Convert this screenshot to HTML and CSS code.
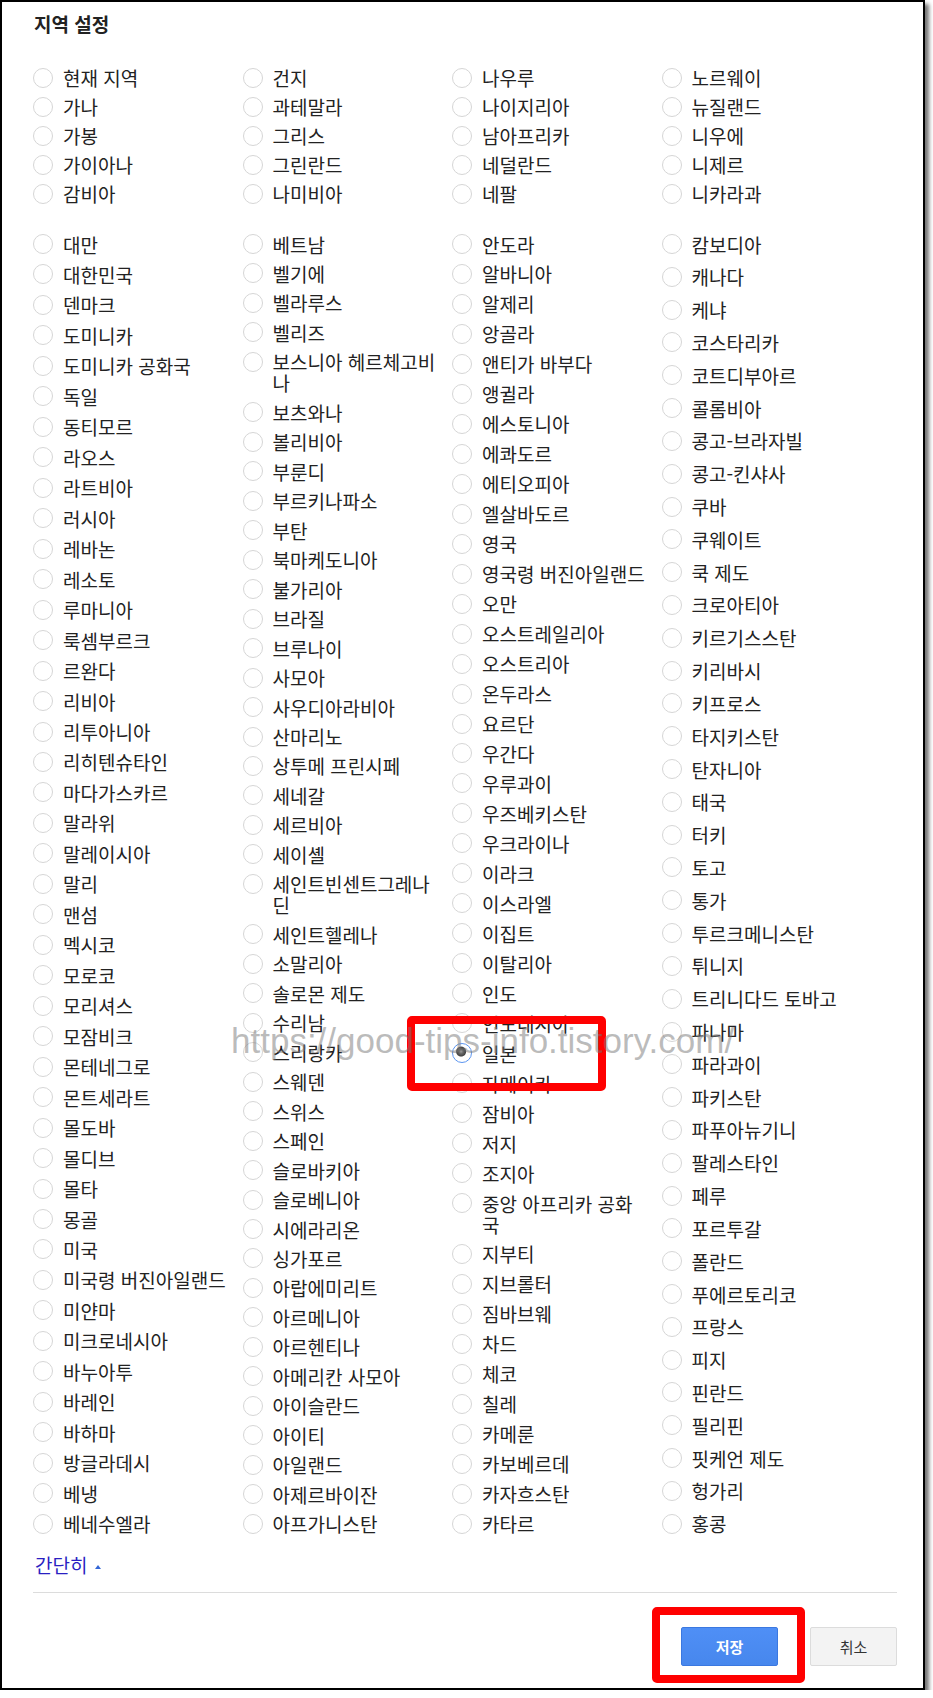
FILE: index.html
```html
<!DOCTYPE html>
<html lang="ko">
<head>
<meta charset="utf-8">
<title>지역 설정</title>
<link rel="stylesheet" href="styles.css">
</head>
<body>
<div class="frame">
  <h2 class="title">지역 설정</h2>

  <div class="group group-top">
    <div class="col">
      <label class="item"><input type="radio" name="r"><span class="txt">현재 지역</span></label>
      <label class="item"><input type="radio" name="r"><span class="txt">가나</span></label>
      <label class="item"><input type="radio" name="r"><span class="txt">가봉</span></label>
      <label class="item"><input type="radio" name="r"><span class="txt">가이아나</span></label>
      <label class="item"><input type="radio" name="r"><span class="txt">감비아</span></label>
    </div>
    <div class="col">
      <label class="item"><input type="radio" name="r"><span class="txt">건지</span></label>
      <label class="item"><input type="radio" name="r"><span class="txt">과테말라</span></label>
      <label class="item"><input type="radio" name="r"><span class="txt">그리스</span></label>
      <label class="item"><input type="radio" name="r"><span class="txt">그린란드</span></label>
      <label class="item"><input type="radio" name="r"><span class="txt">나미비아</span></label>
    </div>
    <div class="col">
      <label class="item"><input type="radio" name="r"><span class="txt">나우루</span></label>
      <label class="item"><input type="radio" name="r"><span class="txt">나이지리아</span></label>
      <label class="item"><input type="radio" name="r"><span class="txt">남아프리카</span></label>
      <label class="item"><input type="radio" name="r"><span class="txt">네덜란드</span></label>
      <label class="item"><input type="radio" name="r"><span class="txt">네팔</span></label>
    </div>
    <div class="col">
      <label class="item"><input type="radio" name="r"><span class="txt">노르웨이</span></label>
      <label class="item"><input type="radio" name="r"><span class="txt">뉴질랜드</span></label>
      <label class="item"><input type="radio" name="r"><span class="txt">니우에</span></label>
      <label class="item"><input type="radio" name="r"><span class="txt">니제르</span></label>
      <label class="item"><input type="radio" name="r"><span class="txt">니카라과</span></label>
    </div>
  </div>

  <div class="group group-all">
    <div class="col spread">
      <label class="item"><input type="radio" name="r"><span class="txt">대만</span></label>
      <label class="item"><input type="radio" name="r"><span class="txt">대한민국</span></label>
      <label class="item"><input type="radio" name="r"><span class="txt">덴마크</span></label>
      <label class="item"><input type="radio" name="r"><span class="txt">도미니카</span></label>
      <label class="item"><input type="radio" name="r"><span class="txt">도미니카 공화국</span></label>
      <label class="item"><input type="radio" name="r"><span class="txt">독일</span></label>
      <label class="item"><input type="radio" name="r"><span class="txt">동티모르</span></label>
      <label class="item"><input type="radio" name="r"><span class="txt">라오스</span></label>
      <label class="item"><input type="radio" name="r"><span class="txt">라트비아</span></label>
      <label class="item"><input type="radio" name="r"><span class="txt">러시아</span></label>
      <label class="item"><input type="radio" name="r"><span class="txt">레바논</span></label>
      <label class="item"><input type="radio" name="r"><span class="txt">레소토</span></label>
      <label class="item"><input type="radio" name="r"><span class="txt">루마니아</span></label>
      <label class="item"><input type="radio" name="r"><span class="txt">룩셈부르크</span></label>
      <label class="item"><input type="radio" name="r"><span class="txt">르완다</span></label>
      <label class="item"><input type="radio" name="r"><span class="txt">리비아</span></label>
      <label class="item"><input type="radio" name="r"><span class="txt">리투아니아</span></label>
      <label class="item"><input type="radio" name="r"><span class="txt">리히텐슈타인</span></label>
      <label class="item"><input type="radio" name="r"><span class="txt">마다가스카르</span></label>
      <label class="item"><input type="radio" name="r"><span class="txt">말라위</span></label>
      <label class="item"><input type="radio" name="r"><span class="txt">말레이시아</span></label>
      <label class="item"><input type="radio" name="r"><span class="txt">말리</span></label>
      <label class="item"><input type="radio" name="r"><span class="txt">맨섬</span></label>
      <label class="item"><input type="radio" name="r"><span class="txt">멕시코</span></label>
      <label class="item"><input type="radio" name="r"><span class="txt">모로코</span></label>
      <label class="item"><input type="radio" name="r"><span class="txt">모리셔스</span></label>
      <label class="item"><input type="radio" name="r"><span class="txt">모잠비크</span></label>
      <label class="item"><input type="radio" name="r"><span class="txt">몬테네그로</span></label>
      <label class="item"><input type="radio" name="r"><span class="txt">몬트세라트</span></label>
      <label class="item"><input type="radio" name="r"><span class="txt">몰도바</span></label>
      <label class="item"><input type="radio" name="r"><span class="txt">몰디브</span></label>
      <label class="item"><input type="radio" name="r"><span class="txt">몰타</span></label>
      <label class="item"><input type="radio" name="r"><span class="txt">몽골</span></label>
      <label class="item"><input type="radio" name="r"><span class="txt">미국</span></label>
      <label class="item"><input type="radio" name="r"><span class="txt">미국령 버진아일랜드</span></label>
      <label class="item"><input type="radio" name="r"><span class="txt">미얀마</span></label>
      <label class="item"><input type="radio" name="r"><span class="txt">미크로네시아</span></label>
      <label class="item"><input type="radio" name="r"><span class="txt">바누아투</span></label>
      <label class="item"><input type="radio" name="r"><span class="txt">바레인</span></label>
      <label class="item"><input type="radio" name="r"><span class="txt">바하마</span></label>
      <label class="item"><input type="radio" name="r"><span class="txt">방글라데시</span></label>
      <label class="item"><input type="radio" name="r"><span class="txt">베냉</span></label>
      <label class="item"><input type="radio" name="r"><span class="txt">베네수엘라</span></label>
    </div>
    <div class="col spread">
      <label class="item"><input type="radio" name="r"><span class="txt">베트남</span></label>
      <label class="item"><input type="radio" name="r"><span class="txt">벨기에</span></label>
      <label class="item"><input type="radio" name="r"><span class="txt">벨라루스</span></label>
      <label class="item"><input type="radio" name="r"><span class="txt">벨리즈</span></label>
      <label class="item"><input type="radio" name="r"><span class="txt">보스니아 헤르체고비나</span></label>
      <label class="item"><input type="radio" name="r"><span class="txt">보츠와나</span></label>
      <label class="item"><input type="radio" name="r"><span class="txt">볼리비아</span></label>
      <label class="item"><input type="radio" name="r"><span class="txt">부룬디</span></label>
      <label class="item"><input type="radio" name="r"><span class="txt">부르키나파소</span></label>
      <label class="item"><input type="radio" name="r"><span class="txt">부탄</span></label>
      <label class="item"><input type="radio" name="r"><span class="txt">북마케도니아</span></label>
      <label class="item"><input type="radio" name="r"><span class="txt">불가리아</span></label>
      <label class="item"><input type="radio" name="r"><span class="txt">브라질</span></label>
      <label class="item"><input type="radio" name="r"><span class="txt">브루나이</span></label>
      <label class="item"><input type="radio" name="r"><span class="txt">사모아</span></label>
      <label class="item"><input type="radio" name="r"><span class="txt">사우디아라비아</span></label>
      <label class="item"><input type="radio" name="r"><span class="txt">산마리노</span></label>
      <label class="item"><input type="radio" name="r"><span class="txt">상투메 프린시페</span></label>
      <label class="item"><input type="radio" name="r"><span class="txt">세네갈</span></label>
      <label class="item"><input type="radio" name="r"><span class="txt">세르비아</span></label>
      <label class="item"><input type="radio" name="r"><span class="txt">세이셸</span></label>
      <label class="item"><input type="radio" name="r"><span class="txt">세인트빈센트그레나딘</span></label>
      <label class="item"><input type="radio" name="r"><span class="txt">세인트헬레나</span></label>
      <label class="item"><input type="radio" name="r"><span class="txt">소말리아</span></label>
      <label class="item"><input type="radio" name="r"><span class="txt">솔로몬 제도</span></label>
      <label class="item"><input type="radio" name="r"><span class="txt">수리남</span></label>
      <label class="item"><input type="radio" name="r"><span class="txt">스리랑카</span></label>
      <label class="item"><input type="radio" name="r"><span class="txt">스웨덴</span></label>
      <label class="item"><input type="radio" name="r"><span class="txt">스위스</span></label>
      <label class="item"><input type="radio" name="r"><span class="txt">스페인</span></label>
      <label class="item"><input type="radio" name="r"><span class="txt">슬로바키아</span></label>
      <label class="item"><input type="radio" name="r"><span class="txt">슬로베니아</span></label>
      <label class="item"><input type="radio" name="r"><span class="txt">시에라리온</span></label>
      <label class="item"><input type="radio" name="r"><span class="txt">싱가포르</span></label>
      <label class="item"><input type="radio" name="r"><span class="txt">아랍에미리트</span></label>
      <label class="item"><input type="radio" name="r"><span class="txt">아르메니아</span></label>
      <label class="item"><input type="radio" name="r"><span class="txt">아르헨티나</span></label>
      <label class="item"><input type="radio" name="r"><span class="txt">아메리칸 사모아</span></label>
      <label class="item"><input type="radio" name="r"><span class="txt">아이슬란드</span></label>
      <label class="item"><input type="radio" name="r"><span class="txt">아이티</span></label>
      <label class="item"><input type="radio" name="r"><span class="txt">아일랜드</span></label>
      <label class="item"><input type="radio" name="r"><span class="txt">아제르바이잔</span></label>
      <label class="item"><input type="radio" name="r"><span class="txt">아프가니스탄</span></label>
    </div>
    <div class="col spread">
      <label class="item"><input type="radio" name="r"><span class="txt">안도라</span></label>
      <label class="item"><input type="radio" name="r"><span class="txt">알바니아</span></label>
      <label class="item"><input type="radio" name="r"><span class="txt">알제리</span></label>
      <label class="item"><input type="radio" name="r"><span class="txt">앙골라</span></label>
      <label class="item"><input type="radio" name="r"><span class="txt">앤티가 바부다</span></label>
      <label class="item"><input type="radio" name="r"><span class="txt">앵귈라</span></label>
      <label class="item"><input type="radio" name="r"><span class="txt">에스토니아</span></label>
      <label class="item"><input type="radio" name="r"><span class="txt">에콰도르</span></label>
      <label class="item"><input type="radio" name="r"><span class="txt">에티오피아</span></label>
      <label class="item"><input type="radio" name="r"><span class="txt">엘살바도르</span></label>
      <label class="item"><input type="radio" name="r"><span class="txt">영국</span></label>
      <label class="item"><input type="radio" name="r"><span class="txt">영국령 버진아일랜드</span></label>
      <label class="item"><input type="radio" name="r"><span class="txt">오만</span></label>
      <label class="item"><input type="radio" name="r"><span class="txt">오스트레일리아</span></label>
      <label class="item"><input type="radio" name="r"><span class="txt">오스트리아</span></label>
      <label class="item"><input type="radio" name="r"><span class="txt">온두라스</span></label>
      <label class="item"><input type="radio" name="r"><span class="txt">요르단</span></label>
      <label class="item"><input type="radio" name="r"><span class="txt">우간다</span></label>
      <label class="item"><input type="radio" name="r"><span class="txt">우루과이</span></label>
      <label class="item"><input type="radio" name="r"><span class="txt">우즈베키스탄</span></label>
      <label class="item"><input type="radio" name="r"><span class="txt">우크라이나</span></label>
      <label class="item"><input type="radio" name="r"><span class="txt">이라크</span></label>
      <label class="item"><input type="radio" name="r"><span class="txt">이스라엘</span></label>
      <label class="item"><input type="radio" name="r"><span class="txt">이집트</span></label>
      <label class="item"><input type="radio" name="r"><span class="txt">이탈리아</span></label>
      <label class="item"><input type="radio" name="r"><span class="txt">인도</span></label>
      <label class="item"><input type="radio" name="r"><span class="txt">인도네시아</span></label>
      <label class="item"><input type="radio" name="r" checked><span class="txt">일본</span></label>
      <label class="item"><input type="radio" name="r"><span class="txt">자메이카</span></label>
      <label class="item"><input type="radio" name="r"><span class="txt">잠비아</span></label>
      <label class="item"><input type="radio" name="r"><span class="txt">저지</span></label>
      <label class="item"><input type="radio" name="r"><span class="txt">조지아</span></label>
      <label class="item"><input type="radio" name="r"><span class="txt">중앙 아프리카 공화국</span></label>
      <label class="item"><input type="radio" name="r"><span class="txt">지부티</span></label>
      <label class="item"><input type="radio" name="r"><span class="txt">지브롤터</span></label>
      <label class="item"><input type="radio" name="r"><span class="txt">짐바브웨</span></label>
      <label class="item"><input type="radio" name="r"><span class="txt">차드</span></label>
      <label class="item"><input type="radio" name="r"><span class="txt">체코</span></label>
      <label class="item"><input type="radio" name="r"><span class="txt">칠레</span></label>
      <label class="item"><input type="radio" name="r"><span class="txt">카메룬</span></label>
      <label class="item"><input type="radio" name="r"><span class="txt">카보베르데</span></label>
      <label class="item"><input type="radio" name="r"><span class="txt">카자흐스탄</span></label>
      <label class="item"><input type="radio" name="r"><span class="txt">카타르</span></label>
    </div>
    <div class="col spread">
      <label class="item"><input type="radio" name="r"><span class="txt">캄보디아</span></label>
      <label class="item"><input type="radio" name="r"><span class="txt">캐나다</span></label>
      <label class="item"><input type="radio" name="r"><span class="txt">케냐</span></label>
      <label class="item"><input type="radio" name="r"><span class="txt">코스타리카</span></label>
      <label class="item"><input type="radio" name="r"><span class="txt">코트디부아르</span></label>
      <label class="item"><input type="radio" name="r"><span class="txt">콜롬비아</span></label>
      <label class="item"><input type="radio" name="r"><span class="txt">콩고-브라자빌</span></label>
      <label class="item"><input type="radio" name="r"><span class="txt">콩고-킨샤사</span></label>
      <label class="item"><input type="radio" name="r"><span class="txt">쿠바</span></label>
      <label class="item"><input type="radio" name="r"><span class="txt">쿠웨이트</span></label>
      <label class="item"><input type="radio" name="r"><span class="txt">쿡 제도</span></label>
      <label class="item"><input type="radio" name="r"><span class="txt">크로아티아</span></label>
      <label class="item"><input type="radio" name="r"><span class="txt">키르기스스탄</span></label>
      <label class="item"><input type="radio" name="r"><span class="txt">키리바시</span></label>
      <label class="item"><input type="radio" name="r"><span class="txt">키프로스</span></label>
      <label class="item"><input type="radio" name="r"><span class="txt">타지키스탄</span></label>
      <label class="item"><input type="radio" name="r"><span class="txt">탄자니아</span></label>
      <label class="item"><input type="radio" name="r"><span class="txt">태국</span></label>
      <label class="item"><input type="radio" name="r"><span class="txt">터키</span></label>
      <label class="item"><input type="radio" name="r"><span class="txt">토고</span></label>
      <label class="item"><input type="radio" name="r"><span class="txt">통가</span></label>
      <label class="item"><input type="radio" name="r"><span class="txt">투르크메니스탄</span></label>
      <label class="item"><input type="radio" name="r"><span class="txt">튀니지</span></label>
      <label class="item"><input type="radio" name="r"><span class="txt">트리니다드 토바고</span></label>
      <label class="item"><input type="radio" name="r"><span class="txt">파나마</span></label>
      <label class="item"><input type="radio" name="r"><span class="txt">파라과이</span></label>
      <label class="item"><input type="radio" name="r"><span class="txt">파키스탄</span></label>
      <label class="item"><input type="radio" name="r"><span class="txt">파푸아뉴기니</span></label>
      <label class="item"><input type="radio" name="r"><span class="txt">팔레스타인</span></label>
      <label class="item"><input type="radio" name="r"><span class="txt">페루</span></label>
      <label class="item"><input type="radio" name="r"><span class="txt">포르투갈</span></label>
      <label class="item"><input type="radio" name="r"><span class="txt">폴란드</span></label>
      <label class="item"><input type="radio" name="r"><span class="txt">푸에르토리코</span></label>
      <label class="item"><input type="radio" name="r"><span class="txt">프랑스</span></label>
      <label class="item"><input type="radio" name="r"><span class="txt">피지</span></label>
      <label class="item"><input type="radio" name="r"><span class="txt">핀란드</span></label>
      <label class="item"><input type="radio" name="r"><span class="txt">필리핀</span></label>
      <label class="item"><input type="radio" name="r"><span class="txt">핏케언 제도</span></label>
      <label class="item"><input type="radio" name="r"><span class="txt">헝가리</span></label>
      <label class="item"><input type="radio" name="r"><span class="txt">홍콩</span></label>
    </div>
  </div>

  <a class="less" href="#">간단히<span class="caret"></span></a>

  <div class="divider"></div>

  <div class="actions">
    <button class="btn btn-primary" type="button">저장</button>
    <button class="btn btn-default" type="button">취소</button>
  </div>

  <div class="mark mark-japan"></div>
  <div class="mark mark-save"></div>
  <div class="watermark">https://good-tips-info.tistory.com/</div>
</div>
</body>
</html>
```

FILE: styles.css
```css
html, body {
  margin: 0;
  padding: 0;
  background: #ffffff;
}

body {
  font-family: "Noto Sans CJK KR", "Noto Sans", sans-serif;
  color: #222222;
}

.frame {
  position: relative;
  box-sizing: border-box;
  width: 925px;
  height: 1690px;
  border: 2px solid #000000;
  box-shadow: 4px 4px 4px rgba(0, 0, 0, 0.55);
  padding: 10px 26px 0 31px;
  background: #ffffff;
}

.title {
  margin: 0;
  font-size: 19px;
  line-height: 24px;
  font-weight: 700;
  color: #222222;
  padding-left: 1px;
}

.group {
  display: grid;
  grid-template-columns: repeat(4, 209.5px);
}

.group-top {
  margin-top: 31px;
}

.group-top .col {
  display: flex;
  flex-direction: column;
  gap: 8px;
}

.group-top .item {
  height: 21px;
}

.group-all {
  margin-top: 29.5px;
  height: 1301px;
}

.col.spread {
  display: flex;
  flex-direction: column;
  justify-content: space-between;
}

.item {
  display: flex;
  align-items: flex-start;
  gap: 10px;
  font-size: 19px;
  line-height: 21px;
  color: #222222;
  cursor: pointer;
}

.txt {
  display: block;
  width: 165px;
}

.item input {
  -webkit-appearance: none;
  appearance: none;
  box-sizing: border-box;
  flex: none;
  width: 20px;
  height: 20px;
  margin: 0.5px 0 0 0;
  border: 1px solid #d6d6d6;
  border-radius: 50%;
  background: #ffffff;
}

.item input:checked {
  border: 1px solid #5b95f0;
  background:
    radial-gradient(circle at 45% 42%, #9a9a9a 0, #6a6a6a 2px, #444444 4.5px, #ffffff 5.5px);
}

.less {
  display: inline-flex;
  align-items: center;
  margin-top: 19px;
  margin-left: 2px;
  font-size: 19px;
  line-height: 22px;
  color: #2a1fc2;
  text-decoration: none;
}

.caret {
  display: inline-block;
  width: 0;
  height: 0;
  margin-left: 8px;
  margin-top: 4px;
  border-left: 3.5px solid transparent;
  border-right: 3.5px solid transparent;
  border-bottom: 4px solid #3366d6;
}

.divider {
  margin-top: 14px;
  height: 1px;
  background: #dcdcdc;
}

.actions {
  display: flex;
  justify-content: flex-end;
  gap: 32px;
  margin-top: 34px;
}

.btn {
  box-sizing: border-box;
  height: 39px;
  border-radius: 2px;
  font-family: "Noto Sans CJK KR", "Noto Sans", sans-serif;
  font-size: 15px;
  padding: 0;
  cursor: pointer;
}

.btn-primary {
  width: 97px;
  background: linear-gradient(#4f8ff6, #4787ed);
  border: 1px solid #3b78e0;
  color: #ffffff;
  font-weight: 700;
}

.btn-default {
  width: 87px;
  background: #f3f3f3;
  border: 1px solid #dcdcdc;
  color: #333333;
}

.mark {
  position: absolute;
  box-sizing: border-box;
  border: 8px solid #ff0000;
  border-radius: 5px;
  pointer-events: none;
}

.mark-japan {
  left: 405px;
  top: 1014px;
  width: 199px;
  height: 75px;
}

.mark-save {
  left: 650px;
  top: 1605px;
  width: 153px;
  height: 76px;
}

.watermark {
  position: absolute;
  left: 229px;
  top: 1019px;
  font-family: "Liberation Sans", Arial, sans-serif;
  font-size: 35px;
  line-height: 40px;
  color: rgba(120, 120, 120, 0.5);
  white-space: nowrap;
  pointer-events: none;
}
```
